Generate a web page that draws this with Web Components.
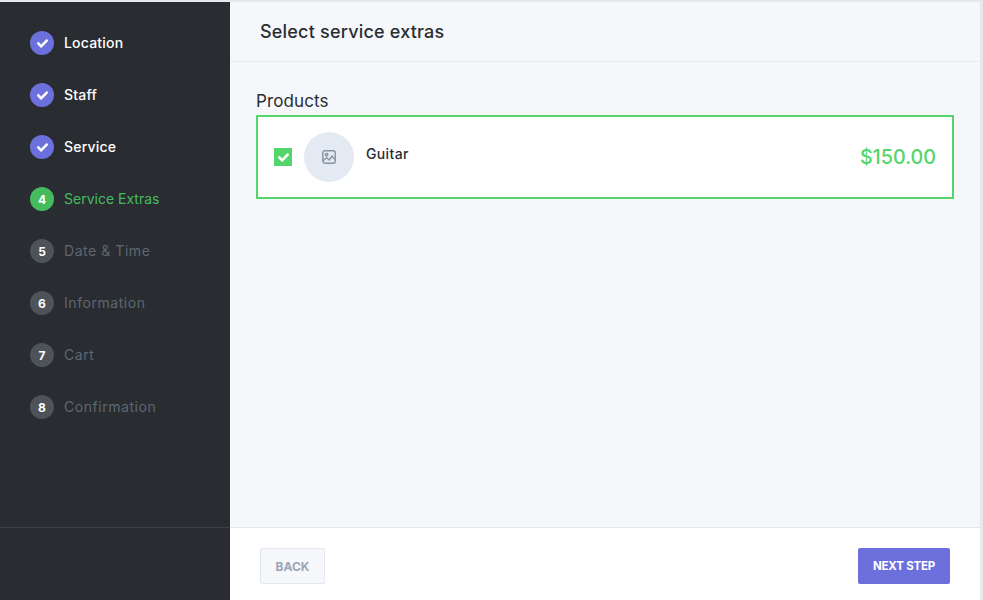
<!DOCTYPE html>
<html><head><meta charset="utf-8"><title>Service extras</title>
<style>
html,body{margin:0;padding:0;height:600px;overflow:hidden;background:#e6e8eb}
body{font-family:Inter,"Liberation Sans",sans-serif}
</style></head><body>
<booking-app>
  <step-nav slot="nav">
    <step-item state="done" label="Location"></step-item>
    <step-item state="done" label="Staff"></step-item>
    <step-item state="done" label="Service"></step-item>
    <step-item state="active" num="4" label="Service Extras"></step-item>
    <step-item num="5" label="Date &amp; Time"></step-item>
    <step-item num="6" label="Information"></step-item>
    <step-item num="7" label="Cart"></step-item>
    <step-item num="8" label="Confirmation"></step-item>
  </step-nav>
  <span slot="title">Select service extras</span>
  <product-row name="Guitar" price="$150.00"></product-row>
</booking-app>
<script>
const CHECK='<svg viewBox="0 0 512 512" width="11" height="11" aria-hidden="true"><path fill="#fff" stroke="#fff" stroke-width="24" d="M173.898 439.404l-166.4-166.4c-9.997-9.997-9.997-26.206 0-36.204l36.203-36.204c9.997-9.998 26.207-9.998 36.204 0L192 312.69 432.095 72.596c9.997-9.997 26.207-9.997 36.204 0l36.203 36.204c9.997 9.997 9.997 26.206 0 36.204l-294.4 294.401c-9.998 9.997-26.207 9.997-36.204-.001z"/></svg>';
class BookingApp extends HTMLElement{constructor(){super();this.attachShadow({mode:'open'}).innerHTML=`<style>
:host{display:flex;width:980px;height:598px;margin-top:2px;color:#292d32;font-family:Inter,"Liberation Sans",sans-serif}
aside{width:230px;flex:none;background:#292d32;display:flex;flex-direction:column}
.nav{flex:1;padding:29px 0 0 30px}
.side-foot{height:72px;border-top:1px solid #3d4146}
main{flex:1;min-width:0;display:flex;flex-direction:column;background:#f5f7fb}
header{height:59px;border-bottom:1px solid #e9ebf0;padding-left:30px;display:flex;align-items:center;font-size:18px;font-weight:500;letter-spacing:.2px}
.body{flex:1;padding:28px 27px 0 26px}
h2{margin:0 0 2px;font-size:17px;line-height:23px;font-weight:400;letter-spacing:.12px}
footer{box-sizing:border-box;height:73px;background:#fff;border-top:1px solid #e3e8f0;display:flex;justify-content:space-between;align-items:flex-start;padding:20px 30px 0}
button{height:36px;border-radius:2px;font:700 12px Inter,"Liberation Sans",sans-serif;box-sizing:border-box;padding:0}
.back{width:65px;background:#f5f7fb;border:1px solid #e3e8f0;color:#9aa5b4}
.next{width:92px;background:#6c70dc;border:0;color:#fff;font-size:11.5px;letter-spacing:-.2px}
</style>
<aside><div class="nav"><slot name="nav"></slot></div><div class="side-foot"></div></aside>
<main><header><slot name="title"></slot></header>
<div class="body"><h2>Products</h2><slot></slot></div>
<footer><button class="back">BACK</button><button class="next">NEXT STEP</button></footer></main>`}}
class StepNav extends HTMLElement{constructor(){super();this.attachShadow({mode:'open'}).innerHTML=`<style>:host{display:flex;flex-direction:column;gap:28px}</style><slot></slot>`}}
class StepItem extends HTMLElement{constructor(){super();const s=this.getAttribute('state')||'todo';const n=this.getAttribute('num');
this.attachShadow({mode:'open'}).innerHTML=`<style>
:host{display:flex;align-items:center;gap:10px;height:24px;font-size:14px;color:#fff}
.c{width:24px;height:24px;border-radius:50%;display:flex;align-items:center;justify-content:center;font:700 12px Inter,"Liberation Sans",sans-serif;color:#fff;background:#4d5358}
.l{font-weight:500;letter-spacing:.2px;margin-bottom:2px}
:host([state=done]) .c{background:#6c70dc}
:host([state=active]) .c{background:#45bb5e}
:host([state=active]) .l{color:#45bb5e;font-weight:400;letter-spacing:0}
:host(:not([state])) .l{color:#5f666f;font-weight:400;letter-spacing:.55px}
svg{display:block}
</style><div class="c">${s==='done'?CHECK:n}</div><div class="l">${this.getAttribute('label')}</div>`}}
class ProductRow extends HTMLElement{constructor(){super();this.attachShadow({mode:'open'}).innerHTML=`<style>
:host{display:flex;align-items:center;box-sizing:border-box;height:84px;width:698px;background:#fff;border:2px solid #53d56c;padding:0 16px}
.box{width:18px;height:18px;background:#53d56c;display:flex;align-items:center;justify-content:center;flex:none}
.pic{width:50px;height:50px;border-radius:50%;background:#e3eaf3;margin-left:12px;display:flex;align-items:center;justify-content:center;flex:none}
.name{margin-left:12px;margin-bottom:8px;font-size:14px;font-weight:500;letter-spacing:.35px;color:#292d32}
.price{margin-left:auto;font-size:19.7px;font-weight:500;color:#53d56c}
svg{display:block}
</style><div class="box">${CHECK}</div>
<div class="pic"><svg width="14" height="14" viewBox="0 0 14 14" fill="none" stroke="#87929f" stroke-width="1.4" aria-hidden="true"><rect x=".8" y=".8" width="12.4" height="12.4" rx="2"/><circle cx="4.6" cy="4.6" r="1.2"/><path d="M1 11 4.5 7.6 7.2 10 10 6.2 13 9.6"/></svg></div>
<div class="name">${this.getAttribute('name')}</div><div class="price">${this.getAttribute('price')}</div>`}}
customElements.define('booking-app',BookingApp);customElements.define('step-nav',StepNav);customElements.define('step-item',StepItem);customElements.define('product-row',ProductRow);
</script>
</body></html>
